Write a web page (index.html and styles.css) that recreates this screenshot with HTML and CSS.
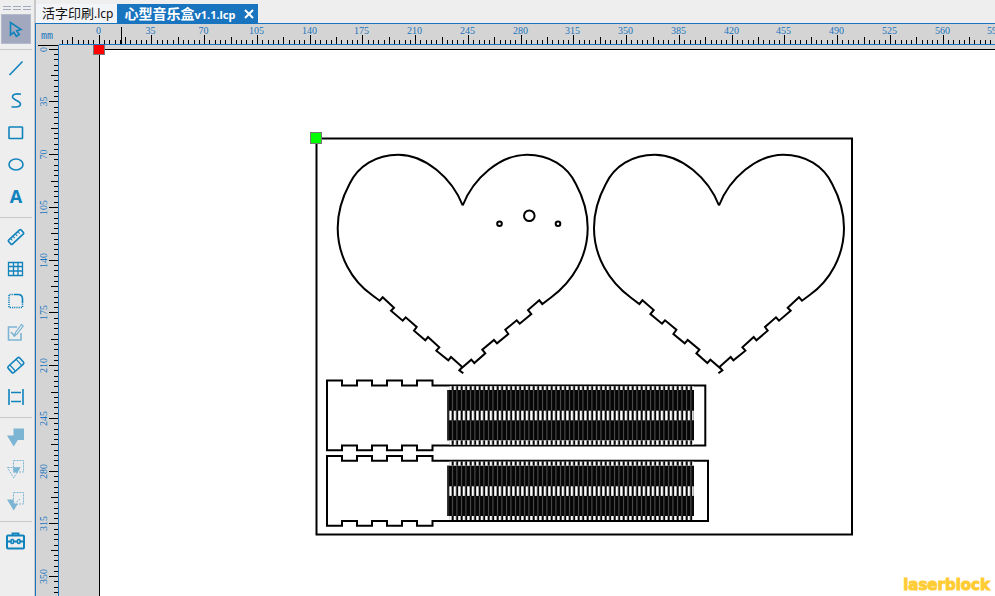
FILE: index.html
```html
<!DOCTYPE html>
<html lang="zh-CN">
  <head>
    <meta charset="UTF-8" />
    <meta name="viewport" content="width=device-width, initial-scale=1.0" />
    <title>心型音乐盒v1.1.lcp</title>
    <link rel="stylesheet" href="styles.css">
  </head>
  <body>
    <!-- Left toolbar -->
    <nav class="toolbar">
      <div class="handle"><i></i><i></i><i></i></div>
      <div class="tool-group">
        <button class="tool active" aria-label="选择">
          <svg viewBox="0 0 24 24"><path d="M6.500 5.500v12.500l3.200-2.700 2.700 4 2.800-1.700-2.500-3.800 4.300-1.300z" /></svg>
        </button>
      </div>
      <div class="tool-group">
        <button class="tool" aria-label="直线">
          <svg viewBox="0 0 24 24"><path d="M5.500 18L18.500 4.500" /></svg>
        </button>
        <button class="tool" aria-label="曲线">
          <svg viewBox="0 0 24 24"><path d="M17 5.300C12 4.300 8.500 5.300 8.500 7.800c0 3.500 8 3.700 8 7.200 0 2.700-4.500 3.500-9 2.800" /></svg>
        </button>
        <button class="tool" aria-label="矩形">
          <svg viewBox="0 0 24 24"><rect x="5" y="6" width="13.500" height="11.500" rx="0.500" /></svg>
        </button>
        <button class="tool" aria-label="椭圆">
          <svg viewBox="0 0 24 24"><ellipse cx="12" cy="11.500" rx="7" ry="5.500" /></svg>
        </button>
        <button class="tool letter" aria-label="文字">A</button>
      </div>
      <div class="tool-group">
        <button class="tool" aria-label="测量">
          <svg viewBox="0 0 24 24"><g transform="rotate(-43 12 12)"><rect x="3.500" y="9.200" width="17" height="5.600" rx="1" /><path d="M7 9.500v2.500M10.300 9.500v2.500M13.600 9.500v2.500M17 9.500v2.500" stroke-width="1" /></g></svg>
        </button>
        <button class="tool" aria-label="网格">
          <svg viewBox="0 0 24 24"><path d="M4.500 5.500h14v13h-14zM9.500 5.500v13M14 5.500v13M4.500 9.500h14M4.500 14h14" stroke-width="1.300" /></svg>
        </button>
        <button class="tool" aria-label="圆角">
          <svg viewBox="0 0 24 24"><path d="M11 5.500h3q4.500 0 4.500 4.500v4" /><path d="M11 5.500H5v13h13.500V14" stroke-dasharray="1.200 1" /></svg>
        </button>
        <button class="tool faded" aria-label="编辑" disabled>
          <svg viewBox="0 0 24 24"><path d="M13 6H4.500v13h12.500v-7M7 11l3.500 4 1.500-2" /><path d="M17.500 3.500l1.700 1.500-6.200 8-2.500 1.500 1-3z" stroke-width="1.200" /></svg>
        </button>
        <button class="tool" aria-label="擦除">
          <svg viewBox="0 0 24 24"><g transform="rotate(-42 12 12)"><rect x="4" y="7.800" width="15.500" height="8.400" rx="1.500" /><path d="M7.500 8v8M16 8v8" stroke-width="1.200" /></g></svg>
        </button>
        <button class="tool" aria-label="间距">
          <svg viewBox="0 0 24 24"><path d="M5 4v16M19 4v16M7 7.500h10M7 16.500h10" /></svg>
        </button>
      </div>
      <div class="tool-group">
        <button class="tool faded" aria-label="并集" disabled>
          <svg viewBox="0 0 24 24"><path class="solid" d="M9.500 3.500H20v11.500h-6.200L9.700 21.500 3 10.500h6.500z" /></svg>
        </button>
        <button class="tool faded" aria-label="交集" disabled>
          <svg viewBox="0 0 24 24"><path d="M9.500 3.500H19.500v11.500h-10zM3.500 10.500h12.500L9.700 21z" stroke-width="1" stroke-dasharray="2 1" /><path class="solid" d="M9.500 10.500h7l-3 5h-4z" /></svg>
        </button>
        <button class="tool faded" aria-label="差集" disabled>
          <svg viewBox="0 0 24 24"><path d="M9.500 3.500H19.500v11.500h-10zM10 15l6-5" stroke-width="1" stroke-dasharray="2 1" /><path class="solid" d="M3 10.500h6.500V15h4.200L9.700 21.500z" /></svg>
        </button>
      </div>
      <div class="tool-group">
        <button class="tool" aria-label="工具箱">
          <svg viewBox="0 0 24 24"><rect x="3" y="6.500" width="17" height="13" rx="1" stroke-width="2" /><path d="M8.500 6V4.500h6V6M3 12.500h4M10 12.500h3M16 12.500h4" stroke-width="1.800" /><rect x="7" y="10.500" width="2.500" height="4" rx="1" /><rect x="13.500" y="10.500" width="2.500" height="4" rx="1" /></svg>
        </button>
      </div>
    </nav>

    <main class="main">
      <!-- File tabs -->
      <div class="tabs">
        <div class="tab">
          <button class="tab-name">活字印刷<span>.lcp</span></button>
        </div>
        <div class="tab current">
          <button class="tab-name">心型音乐盒<span>v1.1.lcp</span></button>
          <button class="tab-close" aria-label="关闭">
            <svg viewBox="0 0 10 10"><path d="M1 1l8 8M9 1l-8 8" /></svg>
          </button>
        </div>
      </div>

      <div class="workspace">
        <div class="unit">mm</div>
        <svg class="ruler ruler-h" id="ruler-h"></svg>
        <svg class="ruler ruler-v" id="ruler-v"></svg>

        <!-- Drawing area -->
        <div class="canvas">
          <svg class="drawing">
            <defs>
              <pattern id="cuts" x="449.200" y="0" width="4.500" height="600" patternUnits="userSpaceOnUse">
                <rect width="4.500" height="600" fill="#050505" />
                <rect x="3" width="0.700" height="600" fill="#777" />
              </pattern>
              <pattern id="gaps" x="449.200" y="0" width="4.500" height="600" patternUnits="userSpaceOnUse">
                <rect width="4.500" height="600" fill="#050505" />
                <rect width="2.400" height="600" fill="#fff" />
              </pattern>
              <path id="heart" d="M462.700 205.500C452 178 425 154.700 398.500 154.700C376 154.700 358 166 349.500 184C342 198 337.700 211 337.700 228C337.700 256 352 281 372 295L379.700 300.700L382.700 297.300L394 307.700L391 310.700L402.700 320.700L405.700 317.300L416.700 327L414 330.700L425.300 340.300L428 337L439.300 347.300L436.300 350.700L448.300 360.300L451 357L462.300 367L459.300 370.300L463.300 373.300M462.700 205.500C473.400 178 500.400 154.700 526.900 154.700C549.400 154.700 567.400 166 575.900 184C583.400 198 587.700 211 587.700 228C587.700 256 573.400 281 551 297.500L542.300 304L539.300 300.300L528 310L531.300 314L519.700 323.700L516.700 320.300L505.300 329.700L508.300 334L497 343.300L494 340L482.300 349.700L485.300 353.300L474.300 363L471.300 359.700L460.300 369.300" />
            </defs>
            <rect class="sheet" x="40.500" y="4.500" width="4000" height="3000" />
            <rect class="origin" x="34.500" y="-1.500" width="11" height="11" />

            <g class="cut" transform="translate(-59 -45)">
              <rect x="316.500" y="138.500" width="535.500" height="396" />
              <use href="#heart" />
              <use href="#heart" transform="translate(1181.700 0) scale(-1 1)" />
              <circle cx="529.300" cy="215.700" r="5.300" />
              <circle cx="499.500" cy="223.700" r="2.300" />
              <circle cx="558" cy="223.700" r="2.300" />

              <!-- Upper side strip -->
              <path d="M327 380.500h15v5h15v-5h15v5h15v-5h15v5h15v-5h15.500v5H705.300V445.500H432.500v4.800H417v-4.800h-15v4.800h-15v-4.800h-15v4.800h-15v-4.800h-15v4.800h-15z" />
              <g stroke="none">
                <rect x="447" y="390" width="247" height="50.500" fill="url(#cuts)" />
                <rect x="449.200" y="386.300" width="244.500" height="3.700" fill="url(#gaps)" />
                <rect x="449.200" y="410.700" width="244.500" height="9.600" fill="url(#gaps)" />
                <rect x="449.200" y="440.500" width="244.500" height="4.200" fill="url(#gaps)" />
              </g>

              <!-- Lower side strip -->
              <path d="M327 456h15v4.700h15v-4.700h15v4.700h15v-4.700h15v4.700h15v-4.700h15.500v4.700H708V521H432.500v4.700H417v-4.700h-15v4.700h-15v-4.700h-15v4.700h-15v-4.700h-15v4.700h-15z" />
              <g stroke="none">
                <rect x="447" y="465.500" width="247" height="50.500" fill="url(#cuts)" />
                <rect x="449.200" y="461.700" width="244.500" height="3.800" fill="url(#gaps)" />
                <rect x="449.200" y="486.300" width="244.500" height="9.600" fill="url(#gaps)" />
                <rect x="449.200" y="516" width="244.500" height="4" fill="url(#gaps)" />
              </g>
              <rect class="start" x="310.500" y="132.500" width="11" height="11" />
            </g>
          </svg>
          <div class="brand">laserblock</div>
        </div>
      </div>
    </main>

    <script src="script.js"></script>
  </body>
</html>
```
FILE: styles.css
```css
* {
  box-sizing: border-box;
}
body {
  display: flex;
  height: 100vh;
  margin: 0;
  overflow: hidden;
  background-color: #eee;
  font-family: "Noto Sans", "Noto Sans CJK SC", sans-serif;
}
button {
  padding: 0;
  border: none;
  background: none;
  color: inherit;
  font: inherit;
}
svg {
  display: block;
}

/* Toolbar */
.toolbar {
  flex: none;
  width: 35px;
  padding-top: 6px;
  border-right: 1px solid #c8c8c8;
}
.handle {
  display: flex;
  gap: 2px;
  height: 8px;
  padding-left: 3px;
}
.handle i {
  width: 8px;
  height: 4px;
  border-top: 1px solid #a2a9be;
  border-bottom: 1px solid #a2a9be;
}
.tool-group {
  display: flex;
  flex-direction: column;
  gap: 2px;
  width: 32px;
  padding-left: 1px;
}
.tool-group + .tool-group {
  margin-top: 5px;
  padding-top: 4px;
  border-top: 1px solid #c8c8c8;
}
.tool {
  display: flex;
  align-items: center;
  justify-content: center;
  width: 30px;
  height: 30px;
  color: #1083bd;
}
.tool.active {
  border: 1px solid #b4b9cb;
  background-color: #a2a9be;
}
.tool.faded {
  color: #7cb5d3;
}
.tool.letter {
  padding-bottom: 2px;
  font-size: 18px;
  font-weight: bold;
}
.tool svg {
  width: 24px;
  height: 24px;
  fill: none;
  stroke: currentColor;
  stroke-width: 1.6;
}
.tool .solid {
  fill: currentColor;
  stroke: none;
}

/* Tabs */
.main {
  display: flex;
  flex: 1;
  flex-direction: column;
  min-width: 0;
}
.tabs {
  display: flex;
  height: 23px;
  padding-top: 4px;
  border-left: 1px solid #c8c8c8;
}
.tab {
  display: flex;
  align-items: center;
  gap: 9px;
  padding: 0 4px 0 6px;
  background-color: #f3f4f8;
  color: #111;
  font-size: 13px;
  line-height: 19px;
  white-space: nowrap;
}
.tab span {
  font-size: 12px;
}
.tab.current {
  padding: 0 4px 0 7px;
  background-color: #1974c0;
  color: #fff;
  font-size: 14px;
  font-weight: bold;
}
.tab.current span {
  font-size: 11px;
}
.tab-close svg {
  width: 10px;
  height: 10px;
  stroke: #fff;
  stroke-width: 2;
}

/* Rulers and canvas */
.workspace {
  display: grid;
  flex: 1;
  grid-template-columns: 23px 1fr;
  grid-template-rows: 21px 1fr;
  min-height: 0;
  border-top: 1px solid #1974c0;
  border-left: 1px solid #1974c0;
  background-color: #d4d4d4;
}
.unit {
  padding: 6px 0 0 5px;
  color: #1974c0;
  font: 10px/14px "Liberation Mono", monospace;
}
.ruler {
  width: 100%;
  height: 100%;
  overflow: hidden;
}
.ruler-h {
  border-bottom: 1px solid #1974c0;
}
.ruler-v {
  border-right: 1px solid #1974c0;
}
.ruler line {
  stroke: #000;
}
.ruler text {
  fill: #1974c0;
  font: 10px "Liberation Serif", serif;
  text-anchor: middle;
}
.canvas {
  position: relative;
  min-width: 0;
  min-height: 0;
}
.drawing {
  position: absolute;
  width: 100%;
  height: 100%;
}
.sheet {
  fill: #fff;
  stroke: #000;
}
.origin {
  fill: #f00;
  stroke: #777;
}
.cut {
  fill: none;
  stroke: #000;
  stroke-width: 2;
}
.cut .start {
  fill: #0f0;
  stroke: #777;
  stroke-width: 1;
}
.brand {
  position: absolute;
  right: 5px;
  bottom: 1px;
  color: #fc3;
  font: bold 15px/20px "DejaVu Sans", sans-serif;
  -webkit-text-stroke: 1px #fc3;
}
```
FILE: script.js
```js
const step = 5.275; // pixels per 3.5 mm
const rulerH = document.getElementById("ruler-h");
const rulerV = document.getElementById("ruler-v");

// Tick length: long on labels, medium halfway
function tickSize(i) {
  if (i % 10 === 0) return 9;
  return i % 5 === 0 ? 7 : 4;
}

function drawHorizontal() {
  const count = (rulerH.clientWidth - 30) / step;
  let html = "";
  for (let i = -7; i < count; i++) {
    const x = Math.floor(40.2 + i * step) + 0.5;
    html += `<line x1="${x}" x2="${x}" y1="${20 - tickSize(i)}" y2="20" />`;
    if (i % 10 === 0) {
      html += `<text x="${x - 1}" y="10">${i * 3.5}</text>`;
    }
  }
  // Pointer position
  html += `<line x1="62.5" x2="62.5" y1="3" y2="20" />`;
  rulerH.innerHTML = html;
}

function drawVertical() {
  const count = rulerV.clientHeight / step;
  let html = "";
  for (let i = 0; i < count; i++) {
    const y = Math.floor(4.2 + i * step) + 0.5;
    html += `<line x1="${22 - tickSize(i)}" x2="22" y1="${y}" y2="${y}" />`;
    if (i % 10 === 0) {
      html += `<text x="11" y="${y}" transform="rotate(-90 11 ${y})">${i * 3.5}</text>`;
    }
  }
  html += `<line x1="2" x2="22" y1="0.5" y2="0.5" />`;
  rulerV.innerHTML = html;
}

drawHorizontal();
drawVertical();
window.addEventListener("resize", () => {
  drawHorizontal();
  drawVertical();
});
```
